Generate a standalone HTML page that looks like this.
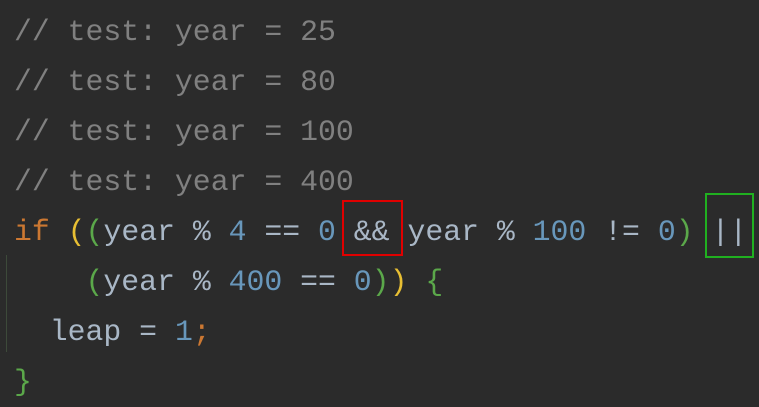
<!DOCTYPE html>
<html><head><style>
html,body{margin:0;padding:0;background:#2b2b2b;width:759px;height:402px;overflow:hidden}
pre{margin:0;position:absolute;left:14px;top:7px;font-family:"Liberation Mono",monospace;font-size:29.8px;line-height:50px;color:#a9b7c6;white-space:pre}
.c{color:#808080}.k{color:#cc7832}.n{color:#6897bb}.y{color:#e8bf33}.g{color:#5ba84a}
.box{position:absolute;box-sizing:border-box}
</style></head><body>
<pre><span class="c">// test: year = 25</span>
<span class="c">// test: year = 80</span>
<span class="c">// test: year = 100</span>
<span class="c">// test: year = 400</span>
<span class="k">if</span> <span class="y">(</span><span class="g">(</span>year % <span class="n">4</span> == <span class="n">0</span> &amp;&amp; year % <span class="n">100</span> != <span class="n">0</span><span class="g">)</span> ||
    <span class="g">(</span>year % <span class="n">400</span> == <span class="n">0</span><span class="g">)</span><span class="y">)</span> <span class="g">{</span>
  leap = <span class="n">1</span><span class="k">;</span>
<span class="g">}</span></pre>
<div class="box" style="left:342px;top:200px;width:61px;height:56px;border:2px solid #e00000"></div>
<div class="box" style="left:705px;top:193px;width:49px;height:65px;border:2px solid #20b020"></div>
<div class="box" style="left:6px;top:255px;width:1px;height:97px;background:#3d4a3a"></div>
</body></html>
